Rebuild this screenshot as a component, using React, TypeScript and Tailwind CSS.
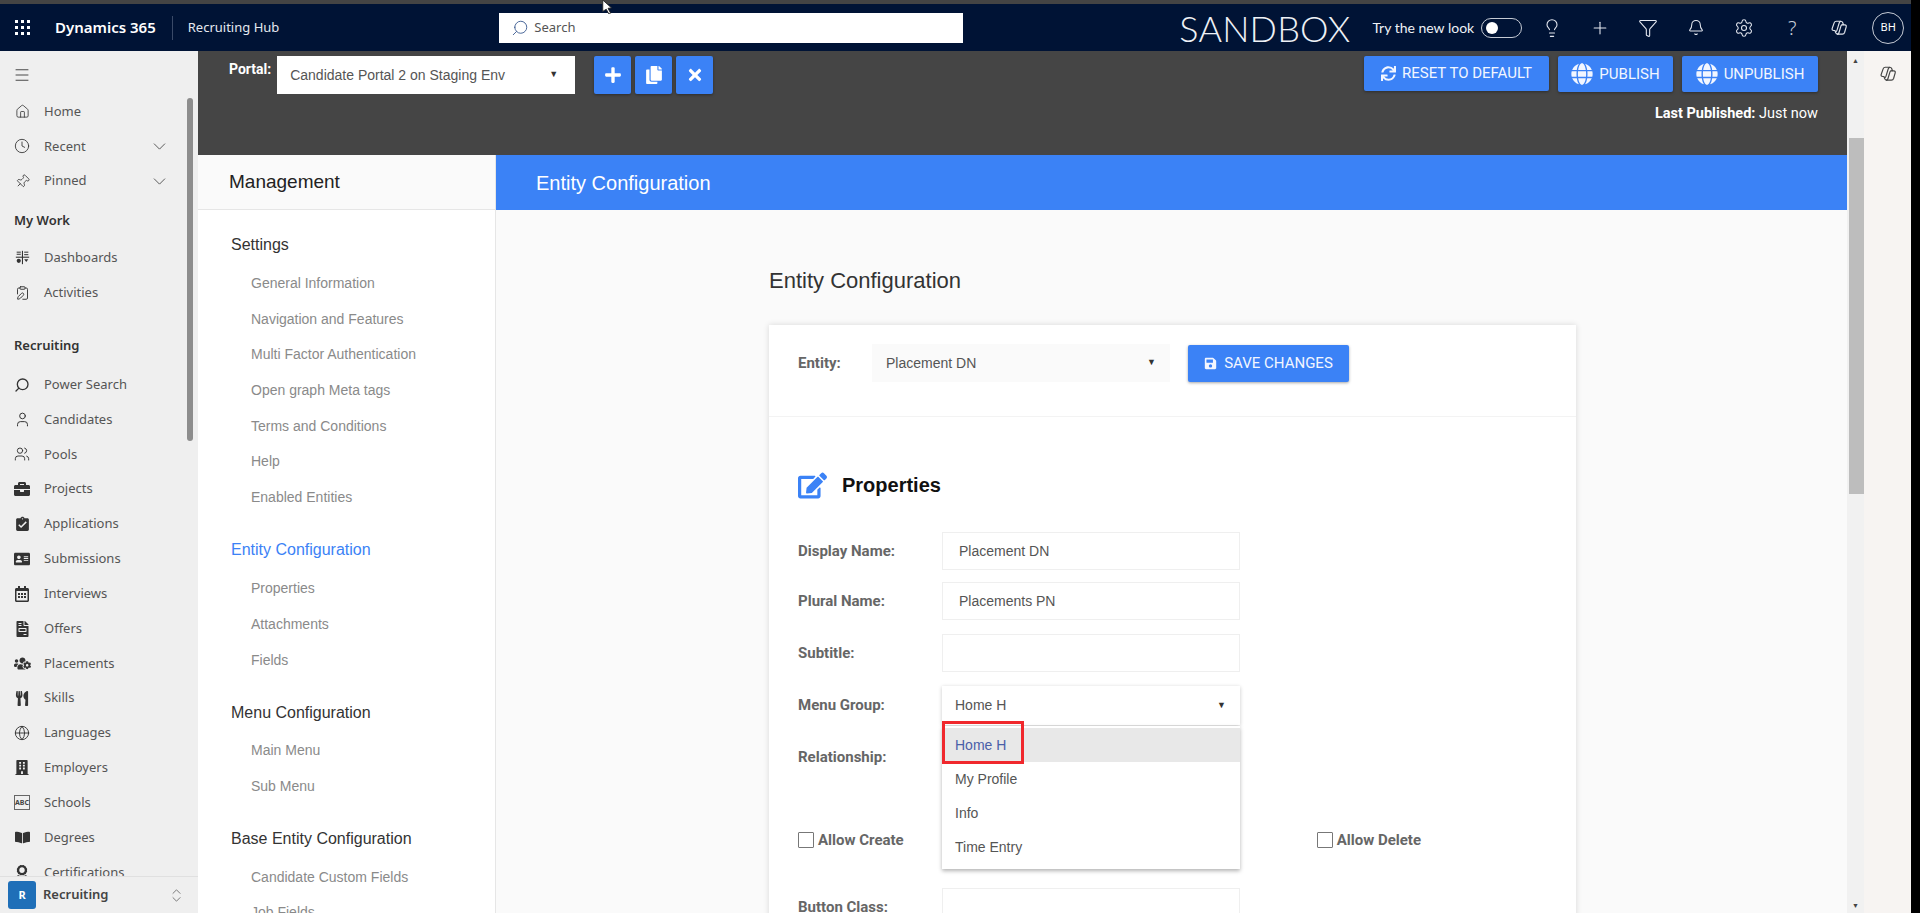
import React from "react";
import {
  Home, Clock, Pin, ChevronDown, ClipboardPen, Search, User, Users, Globe, Lightbulb, Plus, Filter, Bell, Settings, ChevronsUpDown, Menu,
} from "lucide-react";
import { FaPlus, FaCopy, FaTimes, FaSync, FaGlobe, FaSave, FaEdit, FaBriefcase, FaFileInvoice, FaAddressCard, FaRegCalendarAlt, FaUsersCog, FaUtensils, FaBookOpen, FaAward, FaBuilding } from "react-icons/fa";
import { MdAssignmentTurnedIn } from "react-icons/md";

const Copilot = ({ className }: { className?: string }) => (
  <svg viewBox="0 0 20 20" fill="none" stroke="currentColor" strokeWidth="1.3" className={className}>
    <path d="M7 2.500h5c1.200 0 1.800.6 2.200 1.700l.8 2.300h1.500c1.200 0 1.800 1 1.500 2.200l-1.800 6.300c-.4 1.200-1.200 1.800-2.400 1.800H8.500c-1.200 0-1.800-.6-2.200-1.700l-.8-2.300H4c-1.300 0-2-1-1.600-2.200l2.200-6.300C5 3.100 5.800 2.500 7 2.500z" />
    <path d="M12.200 2.700c-1 0-1.700.7-2 1.700l-2.400 8c-.4 1.200-1 2-2.300 2M7.800 17c1 0 1.800-.7 2.100-1.700l2.400-8c.3-1 1-1 2.700-1" />
  </svg>
);

const Dash = ({ className }: { className?: string }) => (
  <svg viewBox="0 0 18 18" fill="currentColor" className={className}>
    <rect x="1" y="8" width="16" height="1.300" />
    <rect x="8.300" y="1" width="1.300" height="16" />
    <rect x="2" y="2" width="5" height="1.200" /><rect x="2" y="4.500" width="5" height="1.200" />
    <rect x="11" y="2" width="5" height="1.200" /><rect x="11" y="5" width="5" height="1.200" />
    <circle cx="4.500" cy="13" r="2.500" /><path d="M11 11h5l-2.500 3.500z" />
  </svg>
);

const Abc = ({ className }: { className?: string }) => (
  <span className={`flex items-center justify-center w-[16px] h-[15px] border border-[#666] text-[7px] font-bold leading-none text-[#444] ${className ?? ""}`}>ABC</span>
);

const nav: [string, React.ReactNode][] = [
  ["Power Search", <Search className="w-[16px] h-[16px] -scale-x-100" strokeWidth={2} />],
  ["Candidates", <User className="w-[17px] h-[17px]" strokeWidth={1.400} />],
  ["Pools", <Users className="w-[16px] h-[16px]" strokeWidth={1.400} />],
  ["Projects", <FaBriefcase className="w-[16px] h-[16px]" />],
  ["Applications", <MdAssignmentTurnedIn className="w-[17px] h-[17px]" />],
  ["Submissions", <FaAddressCard className="w-[16px] h-[16px]" />],
  ["Interviews", <FaRegCalendarAlt className="w-[16px] h-[16px]" />],
  ["Offers", <FaFileInvoice className="w-[15px] h-[16px]" />],
  ["Placements", <FaUsersCog className="w-[17px] h-[17px]" />],
  ["Skills", <FaUtensils className="w-[14px] h-[15px]" />],
  ["Languages", <Globe className="w-[16px] h-[16px]" strokeWidth={1.400} />],
  ["Employers", <FaBuilding className="w-[14px] h-[15px]" />],
  ["Schools", <Abc />],
  ["Degrees", <FaBookOpen className="w-[15px] h-[15px]" />],
  ["Certifications", <FaAward className="w-[14px] h-[15px]" />],
];

function NavRow({ icon, label, chev }: { icon: React.ReactNode; label: string; chev?: boolean }) {
  return (
    <div className="flex items-center h-[34.850px] pl-[13px] shrink-0">
      <span className="w-[18px] flex justify-center text-[#333]">{icon}</span>
      <span className="ml-[13px] text-[13px] text-[#555]">{label}</span>
      {chev && <ChevronDown className="ml-auto mr-[28px] w-[21px] h-[21px] text-[#555]" strokeWidth={1.100} />}
    </div>
  );
}

function Sidebar() {
  return (
    <aside className="relative w-[198px] shrink-0 bg-[#efefef] flex flex-col overflow-hidden font-['Noto_Sans',sans-serif]">
      <div className="h-[39px] pl-[13px] flex items-end shrink-0">
        <Menu className="w-[18px] h-[18px] text-[#444] mb-[6px]" strokeWidth={1.300} />
      </div>
      <div className="mt-[4px]">
        <NavRow icon={<Home className="w-[15px] h-[15px]" strokeWidth={1.300} />} label="Home" />
        <NavRow icon={<Clock className="w-[16px] h-[16px]" strokeWidth={1.300} />} label="Recent" chev />
        <NavRow icon={<Pin className="w-[15px] h-[15px] rotate-45" strokeWidth={1.300} />} label="Pinned" chev />
      </div>
      <div className="pl-[14px] mt-[12px] h-[19px] text-[13px] font-semibold leading-[19px] text-[#333]">My Work</div>
      <div className="mt-[11px]">
        <NavRow icon={<Dash className="w-[15px] h-[15px]" />} label="Dashboards" />
        <NavRow icon={<ClipboardPen className="w-[15px] h-[16px]" strokeWidth={1.500} />} label="Activities" />
      </div>
      <div className="pl-[14px] mt-[26px] h-[19px] text-[13px] font-semibold leading-[19px] text-[#333]">Recruiting</div>
      <div className="mt-[12px]">
        {nav.map(([l, i]) => <NavRow key={l} icon={i} label={l} />)}
      </div>
      <div className="absolute right-[5px] top-[47px] w-[6px] h-[343px] rounded-full bg-[#8d8d8d]" />
      <div className="absolute left-0 right-0 bottom-0 h-[37px] bg-[#efefef] border-t border-[#e0e0e0] flex items-center pl-[8px]">
        <span className="w-[28px] h-[28px] rounded-[3px] bg-[#1f6fb8] text-white text-[11px] font-bold flex items-center justify-center">R</span>
        <span className="ml-[7px] text-[13px] font-semibold text-[#444]">Recruiting</span>
        <ChevronsUpDown className="ml-auto mr-[13px] w-[17px] h-[17px] text-[#666]" strokeWidth={1.200} />
      </div>
    </aside>
  );
}

function Header() {
  const icons = "w-[20px] h-[20px] text-[#e4e8f0]";
  return (
    <header className="h-[47px] shrink-0 bg-[#001335] flex items-center text-white font-['Noto_Sans',sans-serif]">
      <div className="ml-[15px] grid grid-cols-3 gap-[3px] w-[15px]">
        {Array.from({ length: 9 }).map((_, i) => <span key={i} className="w-[3px] h-[3px] bg-white" />)}
      </div>
      <span className="ml-[25px] text-[15px] font-semibold">Dynamics 365</span>
      <span className="ml-[16px] w-px h-[24px] bg-[#3a4a68]" />
      <span className="ml-[15px] text-[13px] text-[#e4e8f0]">Recruiting Hub</span>
      <div className="ml-[220px] w-[464px] h-[30px] bg-white flex items-center pl-[12px] text-[#555]">
        <Search className="w-[18px] h-[18px] -scale-x-100 text-[#3a5a90]" strokeWidth={1.200} />
        <span className="ml-[5px] text-[13px]">Search</span>
      </div>
      <span className="ml-[216px] text-[36px] font-light leading-none tracking-[0.2px] font-['Lato',sans-serif] text-[#eef1f6]">SANDBOX</span>
      <span className="ml-[22px] text-[14px] font-['Lato',sans-serif] text-[#eef1f6]">Try the new look</span>
      <span className="ml-[7px] w-[41px] h-[20px] rounded-full border border-[#c5cad4] flex items-center pl-[4px]">
        <span className="w-[12px] h-[12px] rounded-full bg-white" />
      </span>
      <div className="ml-[20px] flex items-center gap-[28px]">
        <Lightbulb className={icons} strokeWidth={1.300} />
        <Plus className={icons} strokeWidth={1.300} />
        <Filter className={icons} strokeWidth={1.300} />
        <Bell className="w-[20px] h-[17px] text-[#e4e8f0]" strokeWidth={1.500} />
        <Settings className={icons} strokeWidth={1.300} />
        <span className="w-[20px] h-[20px] flex items-center justify-center text-[20px] font-light leading-none text-[#c9cfda]">?</span>
        <Copilot className="w-[18px] h-[18px] text-[#dfe3ea]" />
      </div>
      <span className="ml-[24px] w-[32px] h-[32px] rounded-full border border-[#c5cad4] text-[11px] flex items-center justify-center">BH</span>
    </header>
  );
}

function Topbar() {
  const btn = "h-[35px] rounded-[2px] bg-[#3b82f6] shadow-[0_1px_3px_rgba(0,0,0,0.35)] text-[#f2f6ff] flex items-center justify-center";
  const sq = `${btn} w-[37px] h-[38px] text-white`;
  return (
    <div className="h-[104px] shrink-0 bg-[#454545] pt-[5px] pl-[31px] pr-[29px] font-['Liberation_Sans',sans-serif]">
      <div className="flex items-start">
        <span className="text-[14px] font-bold text-white mt-[3px] font-['Roboto',sans-serif]">Portal:</span>
        <div className="ml-[6px] w-[298px] h-[38px] bg-white flex items-center pl-[13px] pr-[17px] text-[14px] text-[#555] shrink-0">
          <span className="whitespace-nowrap">Candidate Portal 2 on Staging Env</span>
          <span className="ml-auto text-[9px] text-[#333]">▼</span>
        </div>
        <div className={`${sq} ml-[19px]`}><FaPlus className="w-[18px] h-[18px]" /></div>
        <div className={`${sq} ml-[4px]`}><FaCopy className="w-[18px] h-[18px]" /></div>
        <div className={`${sq} ml-[4px]`}><FaTimes className="w-[18px] h-[18px]" /></div>
        <div className={`${btn} ml-auto w-[185px] gap-[6px] text-[15px] font-['Roboto',sans-serif] whitespace-nowrap`}><FaSync className="w-[15px] h-[15px]" />RESET TO DEFAULT</div>
        <div className={`${btn} ml-[9px] w-[115px] h-[36px] gap-[6px] text-[15px] font-['Roboto',sans-serif]`}><FaGlobe className="w-[22px] h-[22px]" />PUBLISH</div>
        <div className={`${btn} ml-[9px] w-[136px] h-[36px] gap-[6px] text-[15px] font-['Roboto',sans-serif]`}><FaGlobe className="w-[22px] h-[22px]" />UNPUBLISH</div>
      </div>
      <div className="mt-[9px] text-right text-[14.500px] text-white font-['Roboto',sans-serif]"><b>Last Published:</b> Just now</div>
    </div>
  );
}

const Item = ({ t, mt }: { t: string; mt?: string }) => (
  <div className={`pl-[53px] h-[20px] leading-[20px] text-[14px] text-[#8a8a8a] ${mt ?? "mt-[15.700px]"}`}>{t}</div>
);
const Head = ({ t, mt, blue }: { t: string; mt: string; blue?: boolean }) => (
  <div className={`pl-[33px] h-[22px] leading-[22px] text-[16px] ${blue ? "text-[#3b82f6]" : "text-[#333]"} ${mt}`}>{t}</div>
);

function Management() {
  return (
    <div className="w-[298px] shrink-0 bg-white border-r border-[#e6e6e6] flex flex-col overflow-hidden font-['Liberation_Sans',sans-serif]">
      <div className="h-[55px] shrink-0 bg-[#fafafa] border-b border-[#e6e6e6] pl-[31px] flex items-center text-[19px] text-[#222]">Management</div>
      <Head t="Settings" mt="mt-[24px]" />
      <Item t="General Information" mt="mt-[17px]" />
      <Item t="Navigation and Features" />
      <Item t="Multi Factor Authentication" />
      <Item t="Open graph Meta tags" />
      <Item t="Terms and Conditions" />
      <Item t="Help" />
      <Item t="Enabled Entities" />
      <Head t="Entity Configuration" mt="mt-[32px]" blue />
      <Item t="Properties" mt="mt-[17px]" />
      <Item t="Attachments" mt="mt-[16px]" />
      <Item t="Fields" mt="mt-[16px]" />
      <Head t="Menu Configuration" mt="mt-[32px]" />
      <Item t="Main Menu" mt="mt-[16px]" />
      <Item t="Sub Menu" mt="mt-[16px]" />
      <Head t="Base Entity Configuration" mt="mt-[32px]" />
      <Item t="Candidate Custom Fields" mt="mt-[17px]" />
      <Item t="Job Fields" mt="mt-[15px]" />
    </div>
  );
}

function Field({ label, value, mt }: { label: string; value?: string; mt: string }) {
  return (
    <div className={`flex items-center ${mt}`}>
      <span className="w-[144px] text-[15px] font-bold text-[#666] font-['Roboto',sans-serif]">{label}</span>
      <div className="w-[298px] h-[38px] bg-white border border-[#efefef] pl-[16px] flex items-center text-[14px] text-[#555]">{value}</div>
    </div>
  );
}

function Content() {
  return (
    <div className="flex-1 min-w-0 flex flex-col bg-[#fafafa] font-['Liberation_Sans',sans-serif]">
      <div className="h-[55px] shrink-0 bg-[#3b82f6] pl-[40px] flex items-center text-[20px] text-white">Entity Configuration</div>
      <div className="pl-[273px] pt-[59px] flex-1 min-h-0">
        <h2 className="h-[24px] leading-[24px] text-[22px] text-[#333]">Entity Configuration</h2>
        <div className="relative mt-[32px] w-[807px] h-[640px] bg-white shadow-[0_0_6px_rgba(0,0,0,0.14)]">
          <div className="h-[92px] border-b border-[#f3f3f3] pl-[29px] pt-[19px] flex items-start">
            <span className="w-[74px] mt-[8px] text-[15px] font-bold text-[#666] font-['Roboto',sans-serif]">Entity:</span>
            <div className="w-[298px] h-[38px] bg-[#fafafa] pl-[14px] pr-[14px] flex items-center text-[14px] text-[#555]">
              Placement DN<span className="ml-auto text-[9px] text-[#333]">▼</span>
            </div>
            <div className="ml-[18px] mt-[1px] w-[161px] h-[37px] rounded-[2px] bg-[#3b82f6] shadow-[0_1px_3px_rgba(0,0,0,0.35)] text-[#f2f6ff] flex items-center justify-center gap-[7px] text-[15px] font-['Roboto',sans-serif] whitespace-nowrap">
              <FaSave className="w-[13px] h-[13px]" />SAVE CHANGES
            </div>
          </div>
          <div className="pl-[29px]">
            <div className="mt-[53px] flex items-center h-[30px]">
              <FaEdit className="w-[29px] h-[29px] text-[#3b82f6]" />
              <span className="ml-[15px] text-[20px] font-bold text-[#111]">Properties</span>
            </div>
            <Field label="Display Name:" value="Placement DN" mt="mt-[32px]" />
            <Field label="Plural Name:" value="Placements PN" mt="mt-[12px]" />
            <Field label="Subtitle:" mt="mt-[14px]" />
            <div className="mt-[14px] flex items-center h-[39px]">
              <span className="w-[144px] text-[15px] font-bold text-[#666] font-['Roboto',sans-serif]">Menu Group:</span>
              <div className="w-[298px] h-[39px] bg-white shadow-[0_1px_4px_rgba(0,0,0,0.22)] pl-[13px] pr-[14px] flex items-center text-[14px] text-[#555]">
                Home H<span className="ml-auto text-[9px] text-[#333]">▼</span>
              </div>
            </div>
            <div className="mt-[22px] h-[20px] text-[15px] font-bold text-[#666] leading-[20px] font-['Roboto',sans-serif]">Relationship:</div>
            <div className="mt-[63px] flex items-center h-[20px] text-[15px] font-bold text-[#666] font-['Roboto',sans-serif]">
              <span className="w-[16px] h-[16px] border border-[#777] rounded-[1px] bg-white" />
              <span className="ml-[4px]">Allow Create</span>
              <span className="ml-[413px] w-[16px] h-[16px] border border-[#777] rounded-[1px] bg-white" />
              <span className="ml-[4px]">Allow Delete</span>
            </div>
            <div className="mt-[38px]"><Field label="Button Class:" mt="mt-0" /></div>
          </div>
          <div className="absolute left-[173px] top-[401px] w-[298px] h-[143px] bg-white shadow-[0_2px_4px_rgba(0,0,0,0.3)] text-[14px] text-[#555] pt-[2px]">
            <div className="h-[34px] bg-[#e8e8e8] pl-[13px] flex items-center text-[#4a5fa8]">Home H</div>
            <div className="h-[34px] pl-[13px] flex items-center">My Profile</div>
            <div className="h-[34px] pl-[13px] flex items-center">Info</div>
            <div className="h-[34px] pl-[13px] flex items-center">Time Entry</div>
          </div>
          <div className="absolute left-[173px] top-[396px] w-[82px] h-[43px] border-[3px] border-[#f0282d]" />
        </div>
      </div>
    </div>
  );
}

export default function App() {
  return (
    <div className="relative w-[1920px] h-[913px] overflow-hidden bg-black flex">
      <div className="w-[1911px] flex flex-col">
        <div className="h-[4px] shrink-0 bg-[#444]" />
        <Header />
        <div className="flex-1 min-h-0 flex overflow-hidden">
          <Sidebar />
          <div className="flex-1 min-w-0 flex flex-col overflow-hidden">
            <Topbar />
            <div className="flex-1 min-h-0 flex overflow-hidden">
              <Management />
              <Content />
            </div>
          </div>
          <div className="w-[17px] shrink-0 bg-[#f1f1f1] flex flex-col items-center relative">
            <span className="mt-[6px] text-[7px] leading-none text-[#444]">▲</span>
            <div className="mt-[74px] w-[15px] ml-[2px] h-[356px] bg-[#bdbdbd]" />
            <span className="mt-auto mb-[4px] text-[7px] leading-none text-[#444]">▼</span>
          </div>
          <div className="w-[47px] shrink-0 bg-[#f7f4f2] flex justify-center pt-[14px]">
            <Copilot className="w-[18px] h-[18px] text-[#444]" />
          </div>
        </div>
      </div>
      <svg viewBox="0 0 14 16" className="absolute left-[601px] top-0 w-[14px] h-[14px]">
        <path d="M1 0 L11 9 L7 9.500 L10 15 L8 16 L5 10.500 L1 13z" fill="#fff" stroke="#222" strokeWidth="1" />
      </svg>
    </div>
  );
}
